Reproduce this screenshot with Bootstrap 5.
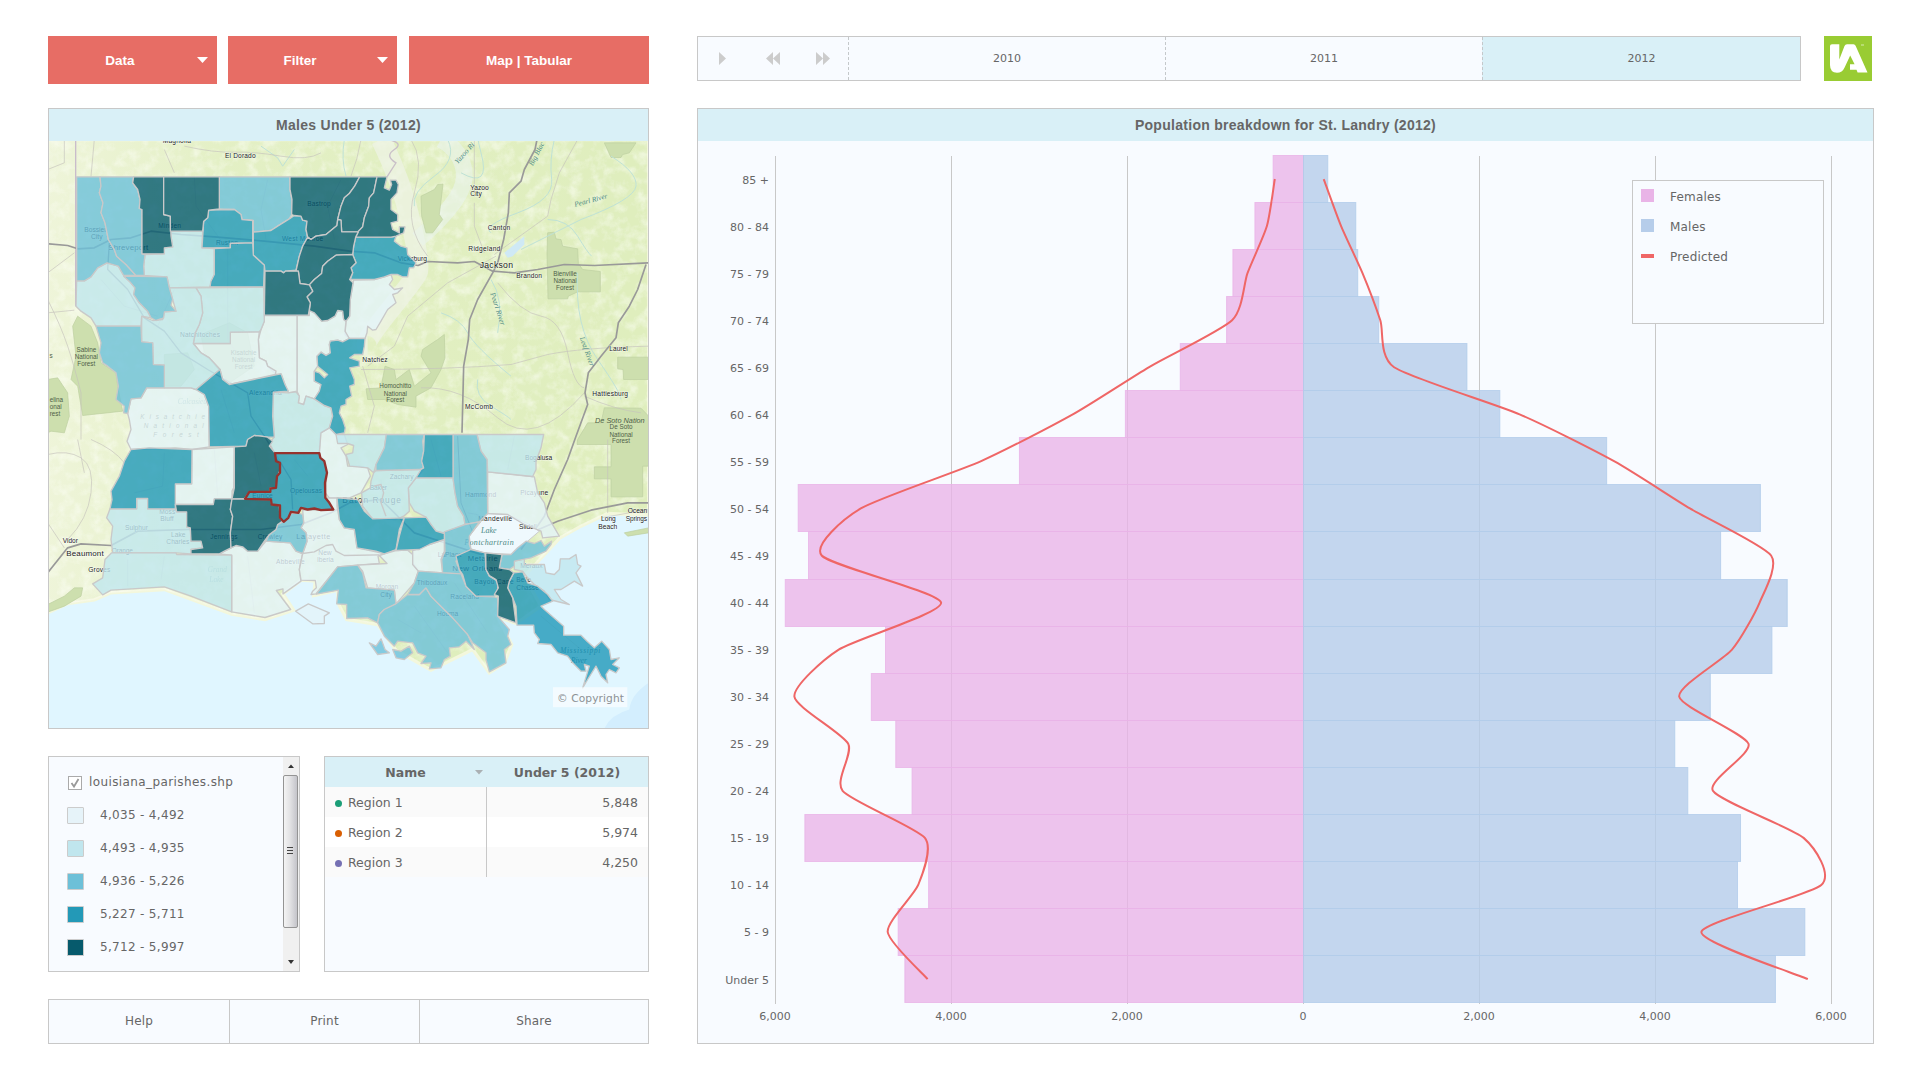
<!DOCTYPE html>
<html lang="en">
<head>
<meta charset="utf-8">
<title>Population dashboard</title>
<link href="https://cdn.jsdelivr.net/npm/bootstrap@5.3.0/dist/css/bootstrap.min.css" rel="stylesheet">
<style>
:root{--line:#c8c8c8;--pane:#f8fbff;--head:#d9f0f7;--ink:#666;--coral:#e76d65}
body{width:1920px;height:1080px;overflow:hidden;background:#fff;color:var(--ink);font:12px/1.2 "DejaVu Sans",sans-serif}
.page{padding:36px 46px 36px 48px;gap:48px}
.left-col{width:601px}
.right-col{width:1177px}
.pane{border:1px solid var(--line);background:var(--pane);border-radius:0}
.pane-title{height:32px;background:var(--head);font:bold 14px/32px "Liberation Sans",sans-serif;letter-spacing:.28px;color:var(--ink);text-align:center}
.btn-coral{background:var(--coral);color:#fff;border:0;border-radius:0;height:48px;padding:0;font:bold 13.5px "Liberation Sans",sans-serif}
.btn-coral:hover{background:var(--coral);color:#fff}
.btn-coral .tri{width:11px;height:6px;right:9px;top:21px}
.w-menu{width:169px}.w-map{width:240px}
.gap-menus{gap:11px}
.menu-label{padding-right:25px}
.time-row{height:45px;margin-bottom:27px;padding-right:2px}
.time-bar{width:1104px}
.time-icons{width:150px}
.year{width:317px;border-left:1px dashed #c4c8ca;font-size:11px}
.year.current{background:var(--head)}
.logo-box{width:48px;height:45px;background:#9c3}
.map-pane{height:621px;margin-bottom:27px}
.chart-pane{height:936px}
.mid-row{height:216px;margin-bottom:27px}
.legend-pane{width:252px}
.layer-list{padding:9px 0 0 18px;font-size:12px;letter-spacing:.32px}
.layer-list .layer-row{height:33px}
.sw{width:17px;height:17px;border:1px solid #ccc;border-radius:1px;margin-right:16px}
.tick{width:14px;height:14px;border:1px solid #aaa;background:#fff;margin:0 7px 0 1px}
.layer-name{letter-spacing:.4px}
.c1{background:#e6f3f9}.c2{background:#c0e6ee}.c3{background:#6dc0d8}.c4{background:#2399b7}.c5{background:#065a6c}
.scroller{width:16px;background:#f0f0f0}
.table-pane{width:325px}
.grid-table{width:323px;font-size:12.5px;color:var(--ink);table-layout:fixed;border-collapse:collapse}
.grid-table th{height:30px;background:var(--head);padding:0;text-align:center;font-size:12.5px}
.grid-table td{height:30px;padding:0}
.grid-table tr td:first-child{border-right:1px solid var(--line);padding-left:10px}
.grid-table tr td:last-child{text-align:right;padding-right:10px}
.grid-table tbody tr:nth-child(odd){background:#fafafa}
.grid-table tbody tr:nth-child(even){background:#fff}
.bullet{width:7px;height:7px;border-radius:50%;margin:2px 6px 0 0}
.foot-bar{height:45px;letter-spacing:.2px}
.foot-bar div+div{border-left:1px solid var(--line)}
svg{display:block}
.chart text{font:11px "DejaVu Sans",sans-serif;fill:#666}
.chart .key{font-size:12px;letter-spacing:.2px}
.fo{fill:#cddfae;stroke:#bccfa0;stroke-width:2}
.rd{fill:none;stroke:#999;stroke-width:5;stroke-linejoin:round}
.r2{fill:none;stroke:#c6c2bd;stroke-width:2}
.rv{fill:none;stroke:#bfe2d6;stroke-width:3}
.pa{stroke:#c9c9c9;stroke-width:4;stroke-linejoin:round;fill-opacity:.8}
.a{fill:#e4f4f9}.b{fill:#c0e7ef}.c{fill:#6cc1d9}.d{fill:#1f98b9}.e{fill:#045a6e}
.town{font-family:"Liberation Sans",sans-serif;fill:#222;font-size:20px;paint-order:stroke;stroke:#fff;stroke-opacity:.6;stroke-width:3px}
.green{font-family:"Liberation Sans",sans-serif;fill:#4f6048;font-size:19px;text-anchor:middle}
.river{font:italic 22px "Liberation Serif",serif;fill:#4c8a86}
</style>
<script src="https://cdn.jsdelivr.net/npm/bootstrap@5.3.0/dist/js/bootstrap.bundle.min.js"></script>
</head>
<body>
<div class="page d-flex">
<div class="left-col d-flex flex-column">
  <div class="d-flex gap-menus mb-4">
    <button class="btn btn-coral w-menu position-relative"><span class="menu-label">Data</span><svg class="tri position-absolute" viewBox="0 0 11 6"><path d="M0 0h11L5.500 6z" fill="#fff"/></svg></button>
    <button class="btn btn-coral w-menu position-relative"><span class="menu-label">Filter</span><svg class="tri position-absolute" viewBox="0 0 11 6"><path d="M0 0h11L5.500 6z" fill="#fff"/></svg></button>
    <button class="btn btn-coral w-map ms-auto">Map | Tabular</button>
  </div>
  <div class="pane map-pane">
    <div class="pane-title">Males Under 5 (2012)</div>
    <svg width="599" height="587" viewBox="4 4.5 1797 1761">
      <defs>
        <filter id="mottle" x="0" y="0" width="100%" height="100%"><feTurbulence type="fractalNoise" baseFrequency=".03" numOctaves="5" seed="8"/><feColorMatrix values="0 0 0 0 .98  0 0 0 0 1  0 0 0 0 .94  2.4 0 0 0 -1"/></filter>
        <linearGradient id="west"><stop offset="0" stop-color="#fbfaf0" stop-opacity=".55"/><stop offset=".3" stop-color="#fbfaf0" stop-opacity=".15"/><stop offset="1" stop-color="#fbfaf0" stop-opacity="0"/></linearGradient>
        <clipPath id="landclip"><path id="landshape" d="M0 0H1803V1127L1680 1122 1600 1160 1536 1196 1430 1310 1480 1400 1405 1452 1350 1432 1392 1515 1370 1572 1325 1600 1275 1530 1150 1592 1045 1532 990 1455 897 1440 872 1393 870 1352 798 1368 803 1325 760 1322 706 1363 738 1412 652 1440 552 1424 350 1350 190 1360 140 1381 60 1392 0 1420Z"/></clipPath>
      </defs>
      <rect width="1803" height="1767" fill="#e0f6ff"/>
      <path d="M1803 1630Q1750 1665 1745 1710Q1690 1725 1670 1767H1803Z" fill="#d3eefe"/>
      <use href="#landshape" fill="#dfeebd" stroke="#f3f7dc" stroke-width="10"/>
      <g clip-path="url(#landclip)">
        <rect width="1803" height="1500" fill="url(#west)"/>
        <rect width="1803" height="1767" filter="url(#mottle)" opacity=".5"/>
        <path d="M1000 0Q1060 120 1090 250T1110 400T1020 520T960 620" fill="none" stroke="#eef3e4" stroke-width="60" opacity=".75"/>
        <path d="M1180 0Q1250 40 1250 110T1110 300" fill="none" stroke="#e9f4ec" stroke-width="50" opacity=".6"/>
      </g>
      <g class="fo">
        <path d="M1120 170L1160 150 1170 135 1186 134 1178 200 1175 225 1185 240 1155 280 1135 280 1122 230Z"/>
        <path d="M1500 280L1520 278 1525 298 1540 300 1545 320 1590 328 1592 372 1605 390 1658 396 1658 457 1590 457 1562 470 1560 478 1501 478 1498 340Z"/>
        <path d="M1670 10H1765L1745 40 1725 45 1720 54 1690 54Z"/>
        <path d="M1710 653H1803V720H1728L1726 690 1710 688Z"/>
        <path d="M955 748L1000 745 1012 680 1040 690 1045 720 1085 690 1100 740 1150 700 1120 650 1125 630 1170 600 1190 585 1192 655 1180 690 1150 745 1105 770 1105 803 1050 795 1010 780 960 780Z"/>
        <path d="M1590 900L1620 850 1660 850 1670 805 1780 806 1803 830V980H1785V1072H1690V1018H1640V982H1690V915H1588Z"/>
        <path d="M75 560L90 530 130 560 150 610 160 670 205 700 210 740 225 815 105 828 90 740 70 720 85 650Z"/>
        <path d="M0 720L30 715 60 760 65 830 50 880 10 875 0 880Z"/>
        <path d="M0 1395L50 1370 80 1345 105 1345 100 1370 50 1400 0 1418Z"/>
        <path d="M460 585L545 550 600 580 620 680 545 730 470 640ZM350 645L420 640 440 690 400 740 350 740Z"/>
        <path d="M1730 1180L1803 1165V1180L1740 1190Z"/>
      </g>
      <g class="rv">
        <path d="M1520 0Q1505 60 1512 120T1410 220T1330 280"/><path d="M1500 240Q1560 240 1590 290T1632 350"/>
        <path d="M1330 420Q1370 480 1350 580"/><path d="M1180 520Q1240 540 1260 580T1390 710"/>
        <path d="M1590 400Q1580 560 1650 660T1720 780"/><path d="M1690 50Q1770 100 1765 140T1600 240L1420 330"/><path d="M890 0Q880 60 895 110"/><path d="M640 20L690 55 705 80 740 30"/>
        <path d="M1200 0Q1230 60 1160 110T1100 200"/><path d="M1290 720Q1280 770 1330 800T1390 840"/><path d="M1240 100Q1330 150 1300 40T1330 0"/>
      </g>
      <path d="M1430 290L1370 340 1380 355 1395 350 1430 315Z" fill="#cfe9f5"/>
      <g class="r2">
        <path d="M350 30L380 100M410 20Q500 40 560 38T700 50T820 40"/><path d="M140 0L130 110M0 90L50 70V0M0 520L80 512M80 340Q40 370 0 400M0 480Q40 560 60 620T100 760V900"/>
        <path d="M1280 0V160M1280 190V260L1310 340M1350 430Q1420 520 1480 530T1560 640T1610 745"/><path d="M940 690Q1200 690 1390 675L1500 645Q1600 625 1803 620"/><path d="M1120 745Q1240 740 1350 835T1610 760"/>
        <path d="M1590 0L1535 100 1510 180 1500 230 1340 345"/><path d="M1345 350L1200 430 1080 530 1040 620 960 680M945 680L980 800 960 880"/><path d="M0 945Q60 930 100 955T130 1060T60 1200M90 900L110 1000M130 900Q200 930 230 970M50 1225L0 1150"/>
        <path d="M1610 770Q1700 810 1780 820M1680 900V1120M1660 1135L1803 1110M1260 1120Q1360 1130 1365 1240M940 0Q930 60 910 110M1090 0Q1130 60 1100 160T1140 350"/>
      </g>
      <path d="M1018 112L1045 70Q1010 50 1040 30T1020 0" fill="none" stroke="#c9bfc8" stroke-width="4"/>
      <path d="M84 0V500" fill="none" stroke="#c9bccb" stroke-width="4"/>
      <g class="r2" opacity=".7">
        <path d="M440 112L445 200 540 330V450M660 120L640 210 655 300M880 120L840 200 860 300M160 420L230 500 330 530M540 440V600L600 690M380 450L330 560M520 750L560 880M350 940L345 1040 260 1060M500 930L510 1070M620 940L640 1040M240 1260V1340M350 1250L340 1320M600 1250L620 1420M780 1010L740 960M1000 1020L1010 1130M1150 900L1180 1010M1400 890L1380 990M1100 1400L1200 1540M1050 1440L1120 1480M1220 1330L1320 1480M1480 1430L1600 1530"/>
      </g>
      <g class="rd">
        <path d="M1468 0L1462 30 1430 90 1420 125 1385 160 1382 220 1368 300 1350 370 1335 400 1290 480 1266 540 1262 600 1248 680 1243 880"/>
        <path d="M0 313L60 318 90 328 140 325 190 300 250 295 310 275 400 285 500 292 650 305 800 320 906 335 980 340 1060 370 1111 378 1140 366 1230 370 1280 366 1335 395 1400 400 1470 390 1550 375 1640 378 1803 370"/>
        <path d="M1795 375L1770 450 1745 500 1712 550 1705 595 1660 650 1622 700 1612 760 1620 795 1585 890 1560 960 1520 1050 1490 1130 1420 1230"/>
        <path d="M0 1300L60 1225 100 1213 190 1218 270 1175 420 1170 640 1170 760 1155 850 1120 906 1090 1000 1080 1100 1180 1300 1245 1450 1180 1530 1145 1630 1112 1740 1090 1803 1090"/>
        <path d="M185 310L180 390 240 450 290 535 350 575 400 640 480 690 600 760 610 830 650 890 730 1020 735 1110" stroke-width="4"/>
        <path d="M1230 890L1240 1090 1300 1240" stroke-width="3"/>
      </g>
      <path d="M1265 1190L1320 1122 1380 1125 1445 1155 1475 1175 1440 1205 1395 1245 1310 1240 1270 1228Z" fill="#eff9fd" stroke="#ccc" stroke-width="3"/>
      <g class="town">
        <text x="345" y="11" textLength="85">Magnolia</text><text x="532" y="55" textLength="92">El Dorado</text><text x="1268" y="150">Yazoo</text><text x="1268" y="170">City</text>
        <text x="1320" y="271" textLength="68">Canton</text><text x="1262" y="335" textLength="96">Ridgeland</text><text x="1296" y="386" style="font-size:26px" textLength="100">Jackson</text><text x="1406" y="414" textLength="77">Brandon</text>
        <text x="1050" y="365" textLength="88">Vicksburg</text><text x="944" y="668" textLength="76">Natchez</text><text x="1252" y="808" textLength="84">McComb</text><text x="1685" y="635" textLength="55">Laurel</text><text x="1634" y="768" textLength="107">Hattiesburg</text>
        <text x="110" y="278">Bossier</text><text x="130" y="299">City</text><text x="182" y="331" style="font-size:24px" textLength="120">Shreveport</text><text x="332" y="265" textLength="68">Minden</text><text x="505" y="317" textLength="66">Ruston</text><text x="703" y="304" textLength="124">West Monroe</text><text x="779" y="200" textLength="70">Bastrop</text><text x="397" y="593" textLength="120">Natchitoches</text><text x="604" y="765" textLength="98">Alexandria</text>
        <text x="45" y="1211" textLength="46">Vidor</text><text x="56" y="1250" style="font-size:24px" textLength="112">Beaumont</text><text x="122" y="1298" textLength="66">Groves</text><text x="192" y="1241" textLength="64">Orange</text><text x="335" y="1123">Moss</text><text x="338" y="1145">Bluff</text><text x="232" y="1171">Sulphur</text><text x="370" y="1192">Lake</text><text x="356" y="1212">Charles</text><text x="488" y="1197" textLength="82">Jennings</text><text x="614" y="1075">Eunice</text><text x="630" y="1197" textLength="74">Crowley</text><text x="727" y="1060" textLength="96">Opelousas</text><text x="746" y="1198" style="font-size:22px" textLength="102">Lafayette</text><text x="685" y="1272" textLength="86">Abbeville</text><text x="812" y="1246">New</text><text x="808" y="1266">Iberia</text>
        <text x="884" y="1089" style="font-size:25px" textLength="176">Baton Rouge</text><text x="1026" y="1017" textLength="72">Zachary</text><text x="966" y="1050">Baker</text><text x="1252" y="1073" textLength="94">Hammond</text><text x="1418" y="1065" textLength="84">Picayune</text><text x="1432" y="962" textLength="82">Bogalusa</text><text x="1292" y="1144" textLength="102">Mandeville</text><text x="1414" y="1167">Slidell</text><text x="1170" y="1251">LaPlace</text><text x="1260" y="1265" style="font-size:23px" textLength="90">Metairie</text><text x="1214" y="1293" style="font-size:24px" textLength="150">New Orleans</text><text x="1418" y="1286">Meraux</text><text x="1280" y="1332" textLength="118">Bayou Cane</text><text x="1406" y="1328">Belle</text><text x="1406" y="1351">Chasse</text><text x="1107" y="1337" textLength="92">Thibodaux</text><text x="1208" y="1377" textLength="86">Raceland</text><text x="1168" y="1428" textLength="64">Houma</text><text x="984" y="1349">Morgan</text><text x="998" y="1372">City</text>
        <text x="1660" y="1144">Long</text><text x="1652" y="1167">Beach</text><text x="1740" y="1120">Ocean</text><text x="1734" y="1143" textLength="64">Springs</text>
      </g>
      <g class="green">
        <text x="116" y="637">Sabine</text><text x="116" y="658">National</text><text x="116" y="679">Forest</text><text x="26" y="787">elina</text><text x="24" y="808">onal</text><text x="22" y="829">rest</text><text x="10" y="655">s</text>
        <text x="588" y="646">Kisatchie</text><text x="588" y="667">National</text><text x="588" y="687">Forest</text><text x="375" y="838" font-style="italic" textLength="194">Kisatchie</text><text x="378" y="866" font-style="italic" textLength="180">National</text><text x="385" y="893" font-style="italic" textLength="136">Forest</text>
        <text x="1552" y="409">Bienville</text><text x="1552" y="430">National</text><text x="1552" y="450">Forest</text><text x="1043" y="746">Homochitto</text><text x="1043" y="768">National</text><text x="1043" y="787">Forest</text>
        <text x="1642" y="850" font-style="italic" style="font-size:22px;text-anchor:start">De Soto Nation</text><text x="1720" y="869">De Soto</text><text x="1720" y="891">National</text><text x="1720" y="910">Forest</text>
      </g>
      <g class="river">
        <text transform="translate(1582 202) rotate(-15)">Pearl River</text><text transform="translate(1328 462) rotate(72)">Pearl River</text><text transform="translate(1596 595) rotate(70)">Leaf River</text><text transform="translate(1230 74) rotate(-48)">Yazoo Ri</text><text transform="translate(1455 80) rotate(-62)">Big Blac</text>
        <text x="390" y="793" opacity=".7">Calcasieu</text><text x="480" y="1298" opacity=".5">Grand</text><text x="485" y="1326" opacity=".5">Lake</text><text x="1538" y="1539" style="fill:#1d6078" textLength="120">Mississippi</text><text x="1570" y="1571" style="fill:#1d6078">River</text><text x="1300" y="1181" style="font-size:24px">Lake</text><text x="1250" y="1215" style="font-size:24px" textLength="148">Pontchartrain</text>
      </g>
      <g class="pa a">
        <path d="M918 422L980 420 1010 412 1030 405 1035 420 1025 435 1040 450 1065 445 1050 460 1035 465 1045 490 1020 510 1000 545 985 570 975 572 960 560 958 580 952 597 905 597 892 585 895 545 906 530 908 480Z"/>
        <path d="M748 528L785 528 785 513 800 520 822 545 840 543 862 530 870 513 885 515 888 540 895 545 892 575 905 597 885 607 870 602 848 605 845 615 848 640 835 648 820 638 808 650 810 680 800 695 800 725 820 735 815 755 800 778 775 770 768 795 752 790 755 770 748 755Z"/>
        <path d="M650 528H748V755L722 760 712 735 700 703 685 705 660 680 655 665 635 655 632 600 640 570 650 545Z"/>
        <path d="M437 612H548V578L635 577 632 600 635 655 655 665 660 680 685 695 683 705 545 735 525 720 517 690 485 655 460 640Z"/>
        <path d="M297 745H430L445 750 470 765 483 800 485 922 433 930 383 925 250 930 238 905 250 870 245 840 240 822 250 778 280 775Z"/>
        <path d="M433 930L560 922 558 1045 553 1055V1078H500L497 1095H383V1033H432Z"/>
        <path d="M515 1243L550 1225 565 1218 585 1222 600 1235 630 1235 655 1205 728 1210 745 1235 765 1242 755 1290 760 1325 706 1363 706 1348 686 1353 729 1410 652 1434 552 1417V1247Z"/>
        <path d="M765 1242L778 1205 775 1180 760 1165 768 1150 765 1112 857 1112 845 1090 835 1075 868 1075 868 1100 875 1140 890 1165 920 1170 928 1225 985 1237 1010 1243 991 1250 995 1272 930 1277 906 1279 870 1282 805 1363 790 1365 795 1355 806 1345 803 1323 760 1322 755 1290Z"/>
        <path d="M765 1242L800 1237 835 1218 855 1215 865 1235 890 1248 995 1246" fill="none"/>
        <path d="M995 1248L1010 1243 1045 1233 1080 1232 1095 1245 1095 1270 1112 1295 1100 1330 1045 1393 1040 1352 960 1345 945 1295 930 1277 1018 1272Z"/>
        <path d="M818 880L845 865 862 882 890 885 900 915 880 925 895 950 900 980 935 980 960 985 968 1010 940 1060 906 1075 845 1075 833 1060 838 1000 830 965 818 955 815 937Z"/>
        <path d="M1320 997L1460 1012 1470 1060 1490 1090 1500 1130 1535 1190 1485 1195 1480 1175 1430 1155 1380 1125 1320 1122Z"/>
        <path d="M1095 1233L1145 1215 1190 1200 1190 1235 1180 1260 1185 1300 1112 1295 1095 1275Z"/>
        <path d="M744 1415L782 1393 845 1420 830 1430 830 1452 795 1453Z"/>
      </g>
      <g class="pa b">
        <path d="M368 275H465L463 325 500 327V405L487 442 365 445 358 412 290 408 288 380 292 345 350 343V325L375 322 370 290Z"/>
        <path d="M445 445L648 443 650 545 640 570 635 577 548 578V612H437L443 580 455 555 465 520 460 470Z"/>
        <path d="M365 445H445L460 470 465 520 455 555 443 580 437 612 460 640 485 655 517 690 445 750 430 745H350V677L317 675 315 610 282 607V530L315 543 345 540 350 517 385 515 375 480Z"/>
        <path d="M87 424H110L130 412 150 385 178 370 212 380 228 408 245 425 262 445 258 465 275 490 300 515 310 535 282 530 280 560H145L130 535 100 515 85 500Z"/>
        <path d="M677 758L722 760 745 757 755 770 752 790 768 795 775 770 800 778 830 798 850 805 855 830 845 865 820 880 815 940H680L665 910 680 893 675 830Z"/>
        <path d="M187 1108H267V1077H300V1108H383L387 1117H417V1162L428 1165 430 1205H460L465 1225 430 1230V1243L385 1240H195L190 1200 195 1160 177 1135Z"/>
        <path d="M192 1240H385L387 1245 552 1247V1417L430 1370 350 1342 190 1352 165 1366 135 1333 165 1315 172 1260Z"/>
        <path d="M865 885H1016L1010 925 985 975 978 1000 960 985 906 980 900 960 895 945 915 940 918 918 900 912 870 912Z"/>
        <path d="M1288 885H1488L1480 925 1465 965 1465 990 1455 1011 1320 997 1318 960 1300 935Z"/>
        <path d="M1105 1015H1216L1222 1060 1230 1100 1248 1130 1252 1155 1190 1180 1165 1175 1145 1150 1135 1133 1100 1115 1085 1090 1082 1045Z"/>
        <path d="M978 1000L985 993 1115 990 1128 985 1120 1000 1105 1015 1082 1045 1085 1115 1068 1130 1045 1140 975 1138 945 1100 942 1060 968 1045 970 1025Z"/>
        <path d="M978 1040L1000 1035 1008 1060 1000 1090 1015 1130" fill="none"/>
        <path d="M1400 1265L1430 1258V1275H1490L1495 1300 1520 1305 1535 1290 1538 1258 1565 1258 1585 1245 1590 1275 1600 1280 1585 1300 1605 1340 1580 1325 1540 1350 1520 1350 1540 1380 1565 1395 1505 1380 1490 1355 1460 1335 1440 1315 1425 1295 1400 1290Z"/>
      </g>
      <g class="pa c">
        <path d="M87 112H157L160 140 155 160 166 190 160 220 172 250 182 300 200 330 207 350 235 375 265 408 228 408 212 380 178 370 150 385 130 412 110 424 87 424Z"/>
        <path d="M157 112H258L255 130 270 150 277 180 275 207 283 210V343L292 345 288 380 290 408H265L235 375 207 350 200 330 182 300 172 250 160 220 166 190 155 160 160 140Z"/>
        <path d="M515 112H727V150L733 180 732 225 725 238 690 260 670 273 617 278V243L583 240 580 225 560 210 515 208Z"/>
        <path d="M228 410L358 412 365 445 375 480 370 497 385 515 350 517 348 535 325 543 310 535 300 515 275 490 258 465 262 445 245 425Z"/>
        <path d="M145 560H280L282 607 315 610 317 675 350 677V745H297L280 775 250 778 240 822 228 820 230 800 205 780 212 740 205 700 180 680 165 670 155 640 160 610Z"/>
        <path d="M705 1147L722 1135 730 1122 752 1120 765 1125 768 1150 760 1165 775 1180 778 1205 765 1242 745 1235 728 1210 655 1205 665 1185 685 1170 690 1155Z"/>
        <path d="M1016 885H1130L1125 905 1128 935 1122 965 1128 985 1115 990 985 993 985 975 1010 925Z"/>
        <path d="M1216 885H1288L1300 935 1318 960 1320 1122 1295 1147 1252 1155 1248 1130 1230 1100 1222 1060 1216 1015Z"/>
        <path d="M1190 1177L1252 1155 1295 1147 1265 1190V1215L1270 1230 1240 1245 1225 1265 1235 1290 1240 1303 1185 1300 1182 1260 1192 1235Z"/>
        <path d="M1363 1245L1390 1245 1410 1225 1435 1205 1460 1212 1480 1203 1490 1220 1512 1205 1510 1215 1495 1235 1450 1255 1400 1265V1280L1385 1290 1355 1285Z"/>
        <path d="M870 1282L930 1277 945 1300 955 1345 1040 1352 1045 1393 1010 1410 995 1425 990 1450 960 1435 897 1437V1395L867 1393 872 1352 806 1364Z"/>
        <path d="M1045 1393L1080 1365 1115 1365 1135 1345 1150 1370 1180 1400 1215 1435 1260 1485 1280 1530 1255 1505 1235 1522 1205 1525 1208 1550 1190 1560 1180 1585 1145 1588 1150 1570 1120 1572 1135 1550 1110 1540 1095 1510 1050 1505 1040 1520 1010 1490 990 1450 995 1425 1010 1410Z"/>
        <path d="M1112 1295L1185 1300 1240 1303 1255 1340 1285 1370 1340 1372 1350 1375V1430L1385 1470 1380 1490 1390 1515 1370 1530 1375 1570 1325 1597 1315 1560 1315 1540 1275 1510 1260 1485 1215 1435 1180 1400 1150 1370 1135 1345 1115 1365 1080 1365 1100 1330Z"/>
        <path d="M965 1510L985 1520 1000 1498 1012 1530 1025 1540 990 1545ZM1035 1530L1060 1535 1085 1520 1095 1540 1070 1560 1045 1555Z"/>
      </g>
      <g class="pa d">
        <path d="M483 212L560 210 580 225 583 240 615 243V310L548 312V325H463L468 245 480 235Z"/>
        <path d="M617 278L670 273 690 260 725 238 740 228 760 230 765 242 778 245 775 270 780 295 765 320 755 350 745 392 713 395 708 400 700 395H652L650 377 617 347Z"/>
        <path d="M615 310L617 347 650 377 648 442H487L490 425 500 405V327L548 325V312Z"/>
        <path d="M924 293H1030L1045 290 1040 305 1060 320 1078 325 1080 345 1105 370 1098 385 1085 385 1080 412 1065 412 1050 405 1030 405 1010 412 980 420 908 420 915 400 910 385 925 370 915 345 918 320Z"/>
        <path d="M848 605L870 602 885 607 905 597H952L950 620 945 645 920 645 906 655 935 665V680L906 685 920 720V735L906 740 912 770 895 780V795L880 800 875 820 885 840 893 865 890 880 865 885 845 865 855 830 850 805 830 798 800 778 815 755 820 735 800 725V695L815 700 830 715 840 705 810 680 808 650 820 638 835 648 848 640 845 615Z"/>
        <path d="M445 750L517 690 525 720 545 735 700 703 712 735 722 755 677 758 675 830 680 893H660L640 890 620 888 600 900 595 920 485 922 483 800 470 765Z"/>
        <path d="M250 930L305 925 433 930 432 1033H383V1108H300V1077H267V1108H187L193 1080 190 1055 215 1010 230 965Z"/>
        <path d="M1130 885H1216V1015H1105L1120 990 1128 985 1122 965 1128 935Z"/>
        <path d="M868 1075L930 1080 950 1115 975 1138 1070 1135 1055 1170 1045 1230 1010 1243 985 1235 928 1225 920 1170 890 1165 875 1140Z"/>
        <path d="M1070 1135L1135 1133 1150 1155 1165 1175 1190 1182V1200L1145 1215 1115 1230 1045 1233 1055 1190Z"/>
        <path d="M1225 1250L1270 1230 1312 1240 1315 1290 1325 1310 1350 1325V1357L1340 1370H1285L1255 1340 1245 1305 1235 1290 1230 1270Z"/>
        <path d="M1385 1325L1398 1300 1425 1297 1440 1330 1470 1340 1500 1365 1515 1385 1480 1400 1490 1410 1548 1460V1487H1600L1618 1505 1640 1525 1662 1505 1685 1530 1690 1560 1715 1555 1695 1575 1715 1585 1705 1600 1685 1590 1675 1605 1680 1630 1660 1610 1645 1580 1620 1620 1605 1645 1625 1580 1610 1575 1615 1595H1600L1575 1570 1560 1550 1530 1540 1510 1515 1470 1512 1475 1500 1460 1480 1458 1457 1408 1457 1405 1400 1395 1375 1380 1345Z"/>
      </g>
      <g class="pa e">
        <path d="M258 112H348V225L368 230 370 290 375 322 350 325V343H283V210L275 207 277 180 270 150 255 130Z"/>
        <path d="M348 112H515V208L483 212 480 235 468 245 465 275H368V230L348 225Z"/>
        <path d="M727 112H936L921 140 905 162 890 175 880 200 870 240 868 258 835 285 805 290 790 300 780 293 775 270 778 245 765 242 760 230 740 228 732 225 733 180 727 150Z"/>
        <path d="M936 112H988L978 160 965 175 963 200 950 235 945 262 932 277H882L880 242 870 240 880 200 890 175 905 162 921 140Z"/>
        <path d="M988 112H1018L1010 145 1025 152 1032 135 1028 122 1045 122 1052 135 1048 160 1030 180V210L1050 225V245L1030 250 1035 270 1055 280 1055 262 1072 262 1068 280 1045 290 1030 293H924L932 275 945 262 950 235 963 200 965 175 978 160Z"/>
        <path d="M780 293L790 300 805 290 835 285 868 258 870 240 880 242 882 277H932L924 293 918 320 915 345 865 347 840 365 825 380 822 402 800 420 785 436 757 432 752 395H745L755 350 765 320Z"/>
        <path d="M915 345L865 347 840 365 825 380 822 402 800 420 785 436 795 455 778 472 788 490 785 513 800 520 822 545 840 543 862 530 870 513 885 515 888 540 895 545 906 530 908 480 916 430 906 420 915 400 910 385 925 370Z"/>
        <path d="M652 395H700L708 400 713 395H752L757 432 785 436 795 455 778 472 788 490 782 527H650Z"/>
        <path d="M560 922L595 920 600 900 620 888 640 890 660 893 675 905 665 920 680 938 695 965 698 990 690 1010 685 1045H668L665 1057H605L590 1078H553L560 1045Z"/>
        <path d="M383 1095H497L500 1078H553L548 1110 555 1130 548 1180 550 1225 530 1235 515 1243H430V1230L465 1225 460 1205H430L428 1165 417 1162V1117H387Z"/>
        <path d="M553 1078L670 1080 672 1095 695 1098 697 1135 705 1145 690 1155 685 1170 665 1185 650 1205 630 1235H600L585 1222 565 1218 550 1225 548 1180 555 1130 548 1110Z"/>
        <path d="M1314 1240L1363 1245 1355 1285 1385 1290 1398 1300 1385 1325 1380 1345 1395 1375 1405 1450 1350 1430 1352 1370 1340 1365 1352 1345 1345 1320 1325 1308 1315 1290Z"/>
      </g>
      <path class="pa d" style="stroke:#96322d;stroke-width:7" d="M682 941H815L818 955 830 965 838 1000 832 1030 833 1075 845 1090 857 1110 820 1112 800 1107 780 1110 760 1105 752 1120 730 1117 722 1135 708 1147 697 1135V1098L672 1095 670 1080 592 1078 605 1057H668V1047L685 1045 688 1010 697 1000V970L685 965Z"/>
      <rect x="1516" y="1643" width="223" height="60" fill="#fff" opacity=".6"/>
      <text x="1528" y="1687" textLength="201" font-family="DejaVu Sans, sans-serif" font-size="32" fill="#8d9295">© Copyright</text>
    </svg>
  </div>
  <div class="mid-row d-flex justify-content-between">
    <div class="pane legend-pane d-flex justify-content-between">
      <div class="layer-list">
        <div class="layer-row d-flex align-items-center"><span class="tick"><svg width="12" height="12"><path d="M2.500 6L5 9.500 9.500 2" fill="none" stroke="#999" stroke-width="1.800"/></svg></span><span class="layer-name">louisiana_parishes.shp</span></div>
        <div class="layer-row d-flex align-items-center"><span class="sw c1"></span>4,035 - 4,492</div>
        <div class="layer-row d-flex align-items-center"><span class="sw c2"></span>4,493 - 4,935</div>
        <div class="layer-row d-flex align-items-center"><span class="sw c3"></span>4,936 - 5,226</div>
        <div class="layer-row d-flex align-items-center"><span class="sw c4"></span>5,227 - 5,711</div>
        <div class="layer-row d-flex align-items-center"><span class="sw c5"></span>5,712 - 5,997</div>
      </div>
      <div class="scroller"><svg width="16" height="214"><defs><linearGradient id="thumb"><stop offset="0" stop-color="#f5f5f5"/><stop offset=".45" stop-color="#e3e3e5"/><stop offset="1" stop-color="#c2c2c8"/></linearGradient></defs><path d="M5 11L8 7.500 11 11zM5 203L8 207 11 203z" fill="#333"/><rect x=".5" y="18.500" width="14" height="152" rx="1.500" fill="url(#thumb)" stroke="#949494"/><path d="M4 90.500h6M4 93.500h6M4 96.500h6" stroke="#444"/></svg></div>
    </div>
    <div class="pane table-pane">
      <table class="grid-table">
        <colgroup><col style="width:161px"><col></colgroup>
        <thead><tr><th class="position-relative">Name<svg class="position-absolute" width="8" height="5" style="right:3px;top:13px"><path d="M0 0h8L4 4.500z" fill="#aab0b3"/></svg></th><th>Under 5 (2012)</th></tr></thead>
        <tbody>
          <tr><td><div class="d-flex align-items-center"><span class="bullet" style="background:#1b9e77"></span>Region 1</div></td><td>5,848</td></tr>
          <tr><td><div class="d-flex align-items-center"><span class="bullet" style="background:#d95f02"></span>Region 2</div></td><td>5,974</td></tr>
          <tr><td><div class="d-flex align-items-center"><span class="bullet" style="background:#7570b3"></span>Region 3</div></td><td>4,250</td></tr>
        </tbody>
      </table>
    </div>
  </div>
  <div class="pane foot-bar d-flex text-center">
    <div class="d-flex align-items-center justify-content-center" style="width:180px">Help</div>
    <div class="d-flex align-items-center justify-content-center" style="width:190px">Print</div>
    <div class="d-flex align-items-center justify-content-center flex-grow-1">Share</div>
  </div>
</div>
<div class="right-col">
  <div class="time-row d-flex justify-content-between">
    <div class="pane time-bar d-flex">
      <div class="time-icons"><svg width="150" height="43" fill="#ccc"><path d="M21 15v13l7-6.500zM75 15v13l-7-6.500zM82 15v13l-7-6.500zM118 15v13l7-6.500zM125 15v13l7-6.500z"/></svg></div>
      <div class="year d-flex align-items-center justify-content-center">2010</div>
      <div class="year d-flex align-items-center justify-content-center">2011</div>
      <div class="year current d-flex align-items-center justify-content-center flex-grow-1">2012</div>
    </div>
    <div class="logo-box flex-shrink-0"><svg width="48" height="45"><path fill="#fff" d="M6 10Q6 8.200 8 8.200H15.300V23.500L20.500 10Q21.200 8.200 23 8.200H29.500Q31 8.200 31.600 9.800L43.500 36.500H33.600L32.500 33.800H26V28.300H30.600L26.200 19.500 20.600 31.500Q18.300 36.800 13 36.800Q6 36.500 6 29Z"/><path d="M37 9h3" stroke="#d6ebaf"/></svg></div>
  </div>
  <div class="pane chart-pane">
    <div class="pane-title">Population breakdown for St. Landry (2012)</div>
    <svg id="pyramid" class="chart" width="1175" height="902" viewBox="698 141 1175 902"></svg>
  </div>
</div>
</div>
<script>
const ages=['85 +','80 - 84','75 - 79','70 - 74','65 - 69','60 - 64','55 - 59','50 - 54','45 - 49','40 - 44','35 - 39','30 - 34','25 - 29','20 - 24','15 - 19','10 - 14','5 - 9','Under 5'];
const PX=0.088, ZERO=1303.5, TOP=156, ROW=47.06;
const females=[345,552,802,874,1400,2024,3228,5742,5625,5889,4750,4911,4633,4448,5666,4260,4606,4530];
const males=[276,594,616,855,1857,2231,3445,5192,4740,5497,5323,4623,4219,4367,4966,4932,5697,5363];
const predF=[1274.8,1266.9,1247.5,1232.1,1148.7,1072.8,980.6,860.8,821.7,941.1,838.7,794.4,848.2,842.6,924.9,918.2,887.7,927.6];
const predM=[1323.7,1341.1,1362.5,1380.3,1394.1,1519.6,1614.5,1689.9,1771.1,1759.6,1732,1679.2,1748.5,1712.9,1803.6,1821.3,1701.4,1807.8];
const K=0.11;
function spline(xs){
  const p=xs.map((x,i)=>[x,TOP+ROW*(i+.5)-.5]);
  let d='M'+p[0];
  for(let i=0;i<p.length-1;i++){
    const a=p[Math.max(i-1,0)],b=p[i],c=p[i+1],e=p[Math.min(i+2,p.length-1)];
    d+=`C${b[0]+K*(c[0]-a[0])} ${b[1]+K*(c[1]-a[1])} ${c[0]-K*(e[0]-b[0])} ${c[1]-K*(e[1]-b[1])} ${c[0]} ${c[1]}`;
  }
  return `<path d="${d}" fill="none" stroke="#ef6666" stroke-width="2"/>`;
}
let s='';
for(let i=-3;i<=3;i++){
  const x=ZERO+i*176;
  s+=`<path d="M${x} 156V1004" stroke="#c8c8c8"/><text x="${x-.5}" y="1020" text-anchor="middle">${i?Math.abs(i*2)+',000':'0'}</text>`;
}
ages.forEach((t,i)=>{
  const y=Math.round(TOP+ROW*i)-.5,h=Math.round(TOP+ROW*(i+1))-.5-y,f=females[i]*PX,m=males[i]*PX;
  s+=`<rect x="${ZERO-f}" y="${y}" width="${f}" height="${h}" fill="#e9b4e8" fill-opacity=".78" stroke="#e8b3e7" stroke-opacity=".8"/>`;
  s+=`<rect x="${ZERO}" y="${y}" width="${m}" height="${h}" fill="#b5cdea" fill-opacity=".8" stroke="#b2ccea" stroke-opacity=".8"/>`;
  s+=`<text x="769" y="${Math.round(TOP+ROW*(i+.5)+4)}" text-anchor="end">${t}</text>`;
});
s+=spline(predF)+spline(predM);
s+=`<rect x="1632.5" y="180.500" width="191" height="143" fill="#f8fbff" stroke="#c8c8c8"/>
<rect x="1641" y="189" width="13" height="13" fill="#e9b4e7"/><rect x="1641" y="219" width="13" height="13" fill="#b6cdea"/><rect x="1641" y="254" width="13" height="4" fill="#ef6666"/>
<text class="key" x="1670" y="201">Females</text><text class="key" x="1670" y="231">Males</text><text class="key" x="1670" y="261">Predicted</text>`;
document.getElementById('pyramid').innerHTML=s;
</script>
</body>
</html>
